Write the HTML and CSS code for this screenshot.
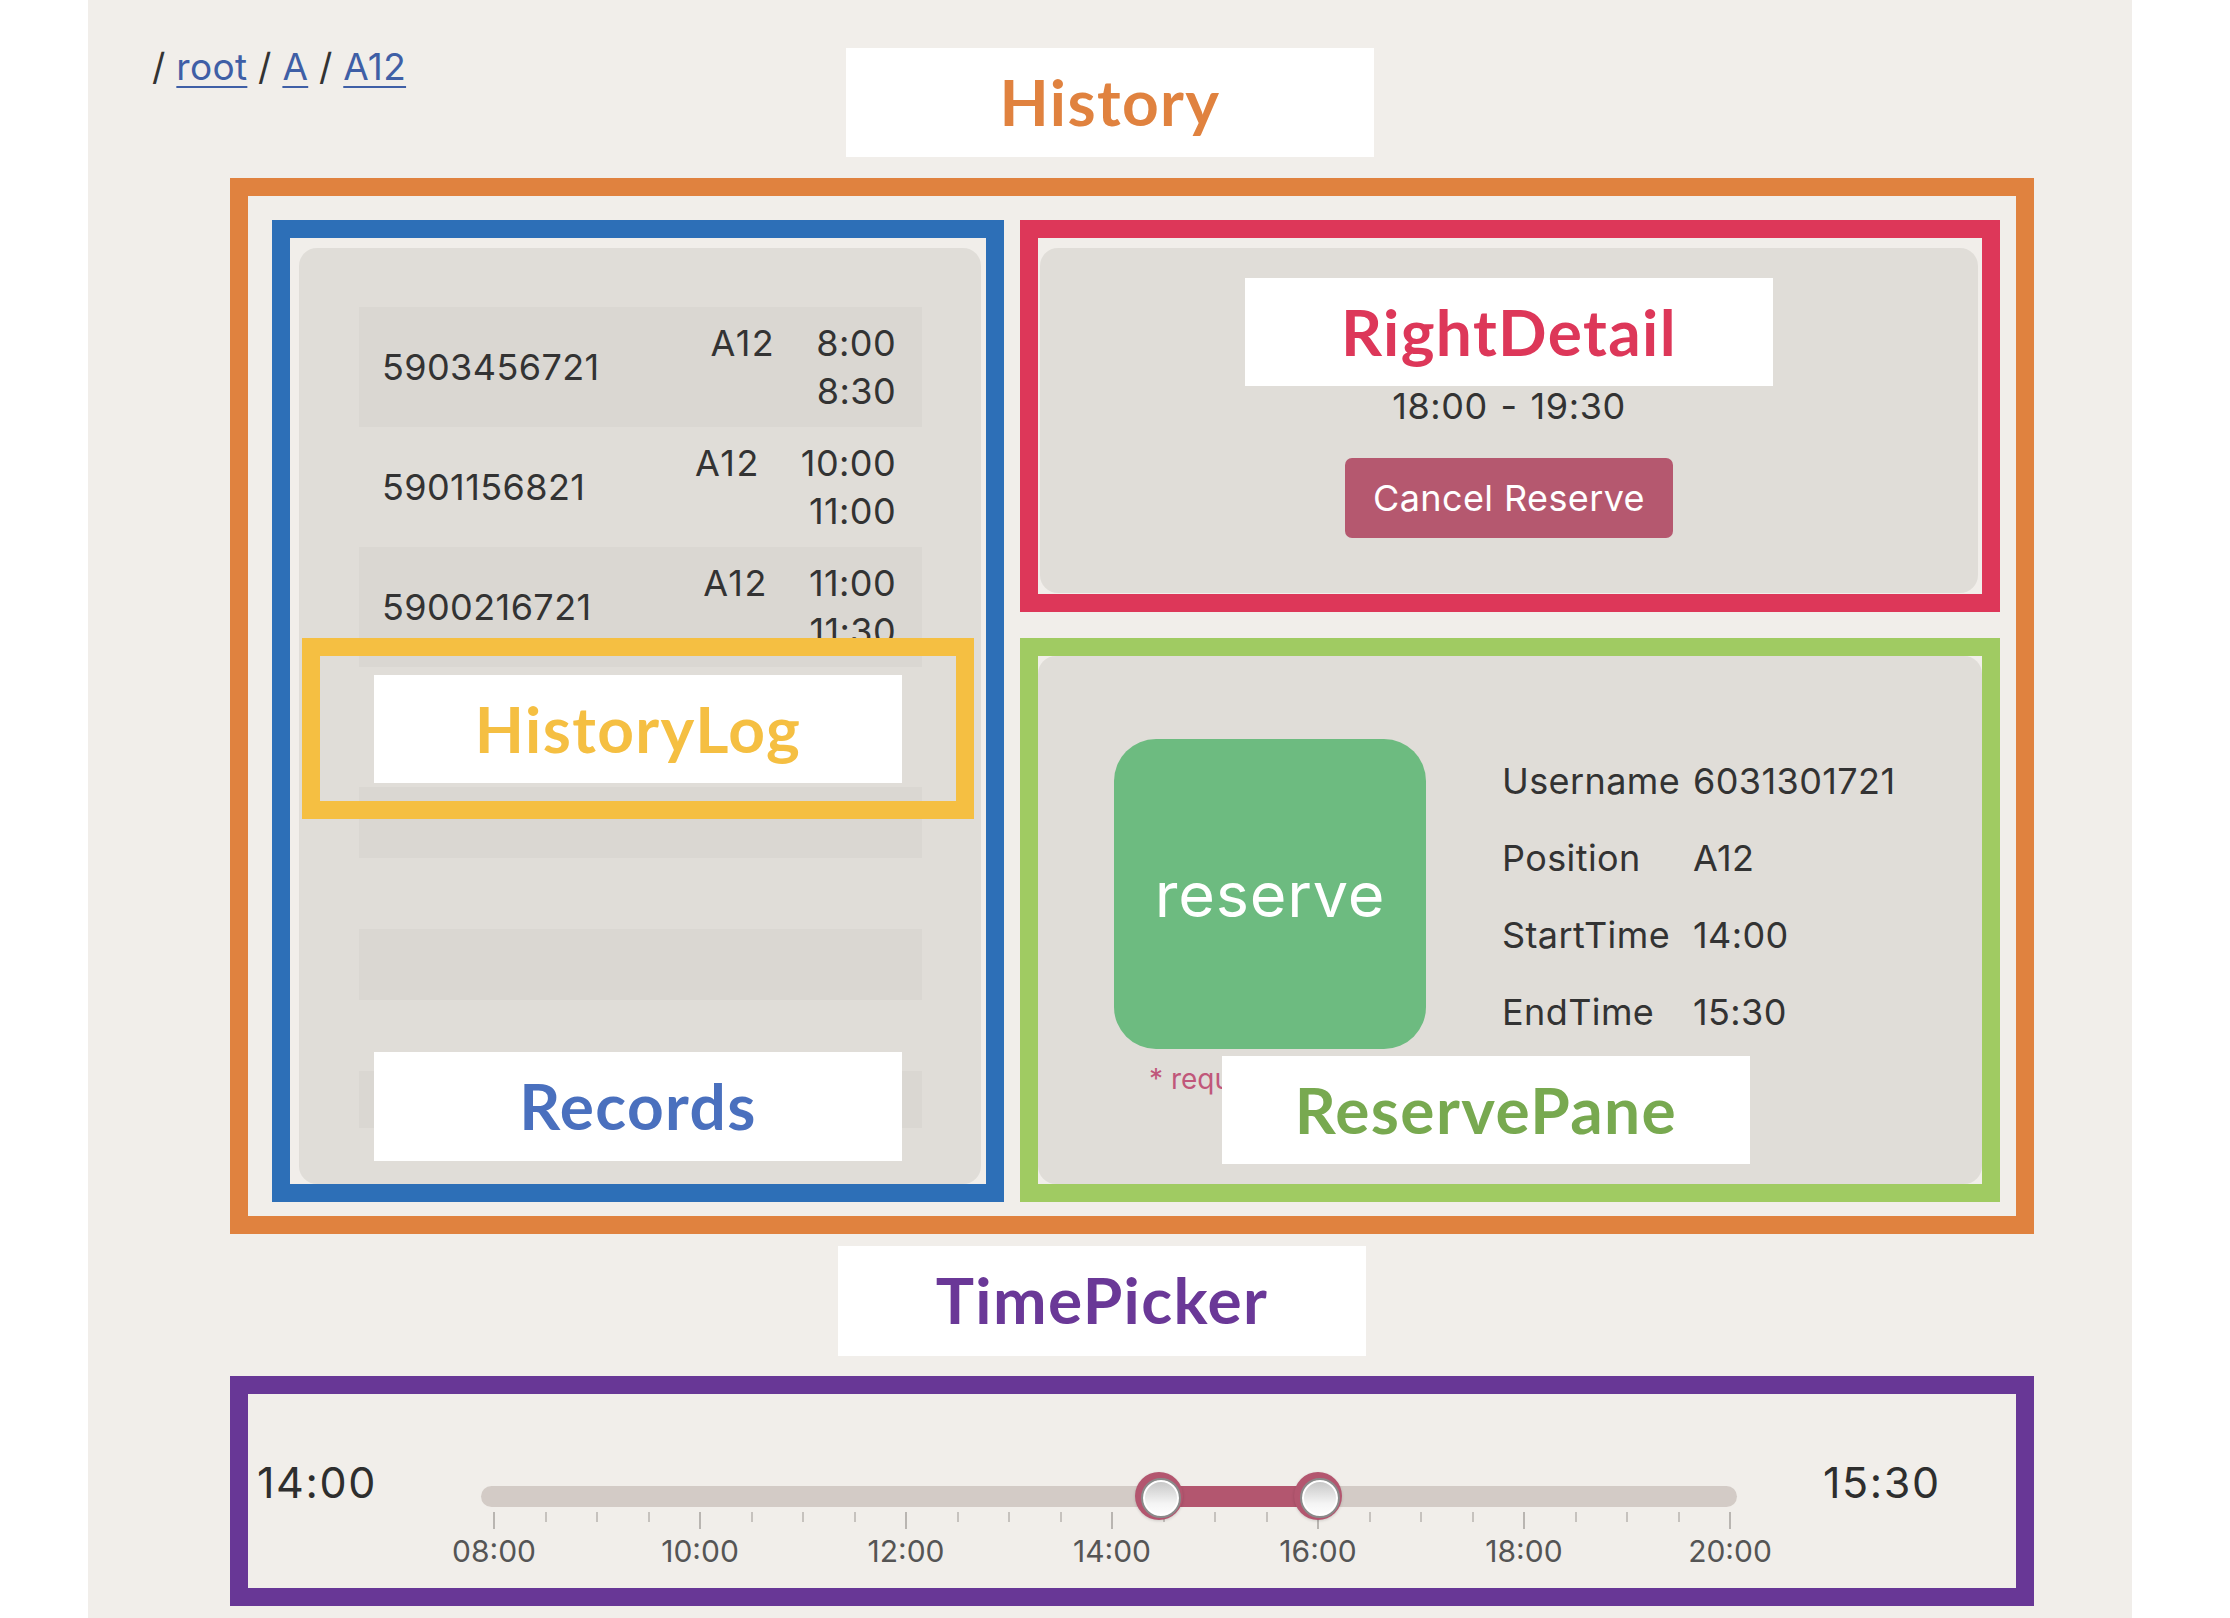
FILE: index.html
```html
<!DOCTYPE html>
<html lang="en">
<head>
<meta charset="utf-8">
<title>History</title>
<link rel="stylesheet" href="styles.css">
</head>
<body>
<div class="page">
  <header class="top">
    <nav class="crumbs">/ <a href="#">root</a> / <a href="#">A</a> / <a href="#">A12</a></nav>
    <div class="tag tag-history">History</div>
  </header>

  <section class="frame frame-history">
    <div class="frame frame-records">
      <div class="card card-records">
        <div class="list">
          <div class="row"><span class="id">5903456721</span><span class="pos">A12</span><span class="t">8:00<br>8:30</span></div>
          <div class="row"><span class="id">5901156821</span><span class="pos">A12</span><span class="t">10:00<br>11:00</span></div>
          <div class="row"><span class="id">5900216721</span><span class="pos">A12</span><span class="t">11:00<br>11:30</span></div>
          <div class="row"><span class="id">5900316721</span><span class="pos">A12</span><span class="t">12:00<br>12:30</span></div>
          <div class="row empty">&nbsp;</div>
          <div class="row empty">&nbsp;</div>
          <div class="row empty">&nbsp;</div>
          <div class="row empty">&nbsp;</div>
          <div class="row empty">&nbsp;</div>
        </div>
      </div>
      <div class="frame-log"><div class="tag tag-log">HistoryLog</div></div>
      <div class="tag tag-records">Records</div>
    </div>

    <div class="frame frame-detail">
      <div class="card card-detail">
        <div class="tag tag-detail">RightDetail</div>
        <div class="detail-time">18:00 - 19:30</div>
        <button class="btn-cancel">Cancel Reserve</button>
      </div>
    </div>

    <div class="frame frame-reserve">
      <div class="card card-reserve">
        <div class="reserve-left">
          <button class="btn-reserve">reserve</button>
          <div class="required">* required</div>
        </div>
        <dl class="info">
          <dt>Username</dt><dd>6031301721</dd>
          <dt>Position</dt><dd>A12</dd>
          <dt>StartTime</dt><dd>14:00</dd>
          <dt>EndTime</dt><dd>15:30</dd>
        </dl>
      </div>
      <div class="tag tag-reserve">ReservePane</div>
    </div>
  </section>

  <div class="tag tag-time">TimePicker</div>

  <section class="frame frame-time">
    <div class="tp-value tp-start">14:00</div>
    <div class="slider">
      <div class="track"></div>
      <div class="range" style="left:678px;width:159px"></div>
      <div class="ticks">
        <i class="tick major"></i><i class="tick"></i><i class="tick"></i><i class="tick"></i>
        <i class="tick major"></i><i class="tick"></i><i class="tick"></i><i class="tick"></i>
        <i class="tick major"></i><i class="tick"></i><i class="tick"></i><i class="tick"></i>
        <i class="tick major"></i><i class="tick"></i><i class="tick"></i><i class="tick"></i>
        <i class="tick major"></i><i class="tick"></i><i class="tick"></i><i class="tick"></i>
        <i class="tick major"></i><i class="tick"></i><i class="tick"></i><i class="tick"></i>
        <i class="tick major"></i>
      </div>
      <div class="labels">
        <span>08:00</span><span>10:00</span><span>12:00</span><span>14:00</span><span>16:00</span><span>18:00</span><span>20:00</span>
      </div>
      <div class="handle" style="left:678px"></div>
      <div class="handle" style="left:837px"></div>
    </div>
    <div class="tp-value tp-end">15:30</div>
  </section>
</div>
</body>
</html>
```

FILE: styles.css
```css
* { box-sizing: border-box; }

body {
  margin: 0;
  background: #ffffff;
  font-family: Inter, "Liberation Sans", sans-serif;
  color: #333333;
}

.page {
  margin-left: 88px;
  width: 2044px;
  min-height: 1618px;
  background: #f1eeea;
  overflow: hidden;
}

/* ---------- header ---------- */
.top {
  display: grid;
  grid-template-columns: 1fr 528px 1fr;
  align-items: start;
  height: 178px;
  padding-top: 47px;
}

.crumbs {
  padding-left: 64px;
  font-size: 37px;
  line-height: 40px;
  letter-spacing: 0.3px;
  color: #333333;
}

.crumbs a {
  color: #3f5fa6;
  text-decoration: underline;
  text-decoration-thickness: 2px;
  text-underline-offset: 6px;
}

/* ---------- annotation labels ---------- */
.tag {
  width: 528px;
  height: 108px;
  background: #ffffff;
  font-family: Lato, "Open Sans", sans-serif;
  font-weight: 700;
  font-size: 64px;
  line-height: 108px;
  letter-spacing: 1.4px;
  text-align: center;
  white-space: nowrap;
}

.top .tag { margin-top: 1px; }

.tag-history { color: #e0823f; height: 109px; }
.tag-detail { color: #dd3759; }
.tag-log { color: #f5bf42; }
.tag-records { color: #4a70be; height: 109px; }
.tag-reserve { color: #78a950; }
.tag-time { color: #6a3897; height: 110px; margin: 12px 0 0 750px; }

/* ---------- frames ---------- */
.frame { border: 18px solid transparent; }

.frame-history {
  border-color: #e0823f;
  margin-left: 142px;
  width: 1804px;
  height: 1056px;
  padding: 24px 16px 14px 24px;
  display: grid;
  grid-template-columns: 732px 980px;
  grid-template-rows: 392px 564px;
  column-gap: 16px;
  row-gap: 26px;
}

.card {
  background: #e0ddd8;
  border-radius: 18px;
  height: 100%;
}

/* records */
.frame-records {
  grid-row: 1 / 3;
  border-color: #2d6fb7;
  padding: 10px 5px 0 9px;
  position: relative;
}

.card-records { padding: 59px 59px 0 60px; }

.list {
  height: 821px;
  overflow: hidden;
}

.row {
  display: flex;
  align-items: center;
  padding: 12px 26px 12px 23px;
  font-size: 36px;
  line-height: 48px;
  letter-spacing: 0.4px;
  color: #333333;
}

.row.empty { height: 71px; }

.row:nth-child(odd) { background: #dad7d2; }

.row .id { flex: 1; }
.row .pos { align-self: flex-start; margin-right: 41px; letter-spacing: 1.5px; }
.row .t { text-align: right; }

.frame-log {
  position: absolute;
  left: 12px;
  top: 400px;
  width: 672px;
  height: 181px;
  border: 18px solid #f5bf42;
  display: flex;
  align-items: center;
  justify-content: center;
}

.tag-records {
  position: absolute;
  left: 84px;
  top: 814px;
}

/* detail */
.frame-detail {
  border-color: #dd3759;
  padding: 10px 4px 1px 2px;
}

.card-detail {
  display: flex;
  flex-direction: column;
  align-items: center;
  padding-top: 30px;
}

.detail-time {
  font-size: 36px;
  line-height: 40px;
  letter-spacing: 0.6px;
  word-spacing: 2px;
  color: #333333;
}

.btn-cancel {
  margin-top: 32px;
  width: 328px;
  height: 80px;
  border: 0;
  border-radius: 7px;
  background: #b5586f;
  color: #ffffff;
  font-family: Inter, "Liberation Sans", sans-serif;
  font-size: 36px;
  letter-spacing: 0.4px;
}

/* reserve */
.frame-reserve {
  border-color: #a0cb62;
  position: relative;
}

.card-reserve {
  display: flex;
  align-items: flex-start;
  padding: 83px 0 0 76px;
}

.reserve-left { width: 312px; }

.btn-reserve {
  display: block;
  width: 312px;
  height: 310px;
  border: 0;
  border-radius: 42px;
  background: #6dbb80;
  color: #ffffff;
  font-family: Inter, "Liberation Sans", sans-serif;
  font-size: 63px;
  letter-spacing: 0.8px;
}

.required {
  margin-top: 13px;
  padding-left: 35px;
  font-size: 28px;
  line-height: 34px;
  color: #c0577a;
}

.info {
  margin: 4px 0 0 76px;
  display: grid;
  grid-template-columns: 191px auto;
  font-size: 36px;
  line-height: 77px;
  letter-spacing: 0.4px;
  color: #333333;
}

.info dt, .info dd { margin: 0; }

.tag-reserve {
  position: absolute;
  left: 184px;
  top: 400px;
}

/* ---------- time picker ---------- */
.frame-time {
  border-color: #683796;
  margin: 20px 0 0 142px;
  width: 1804px;
  height: 230px;
  display: flex;
  align-items: flex-start;
  padding: 63px 0 0 9px;
}

.tp-value {
  font-size: 43px;
  line-height: 50px;
  letter-spacing: 1.6px;
  color: #2e2e2e;
}

.tp-start { width: 224px; }
.tp-end { margin-left: 86px; }

.slider {
  position: relative;
  width: 1256px;
  margin-top: 3px;
  padding-top: 26px;
}

.track {
  height: 21px;
  border-radius: 11px;
  background: #d3cbc6;
}

.range {
  position: absolute;
  top: 26px;
  height: 21px;
  background: #b3566f;
}

.ticks {
  display: flex;
  justify-content: space-between;
  align-items: flex-start;
  margin: 5px 6px 0 12px;
}

.tick {
  display: block;
  width: 2px;
  height: 10px;
  background: #c6c2be;
}

.tick.major {
  height: 17px;
  background: #b9b5b1;
}

.labels {
  display: flex;
  justify-content: space-between;
  margin: 4px -53px 0 -47px;
}

.labels span {
  width: 120px;
  text-align: center;
  font-size: 30px;
  line-height: 36px;
  color: #555555;
}

.handle {
  position: absolute;
  top: 12px;
  width: 48px;
  height: 48px;
  margin-left: -24px;
  border-radius: 50%;
  background: #b3566f;
  box-shadow: 0 1px 3px rgba(0, 0, 0, 0.15);
}

.handle::after {
  content: "";
  position: absolute;
  left: 6px;
  top: 6px;
  width: 36px;
  height: 36px;
  border-radius: 50%;
  border: 2px solid #8a8a8a;
  background: linear-gradient(#c4c4c4, #f4f4f4 65%, #ffffff);
  box-shadow: inset 0 0 0 2px #ffffff;
}
```
